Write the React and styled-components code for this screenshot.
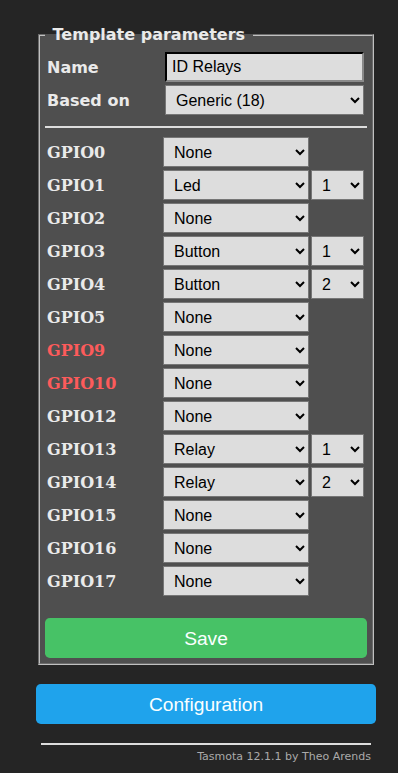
import React from "react"
import styled, { createGlobalStyle } from "styled-components"

const GlobalStyle = createGlobalStyle`
  html, body {
    margin: 0;
    padding: 0;
    background: #252525;
  }
  body {
    font-family: "DejaVu Sans", Verdana, sans-serif;
    color: #eaeaea;
  }
`

const Page = styled.div`
  width: 340px;
  margin: 0 0 0 36px;
  padding-top: 25px;
  padding-bottom: 10px;
  display: flex;
  flex-direction: column;
`

const Fieldset = styled.fieldset`
  margin: 0 2px;
  padding: 5px;
  background: #4f4f4f;
  border: 2px groove #c0c0c0;
  min-width: 0;
`

const Legend = styled.legend`
  padding: 0 2px;
  font-size: 16px;
  font-weight: bold;
  color: #eaeaea;
  white-space: pre;
`

const ParamGrid = styled.div`
  display: grid;
  grid-template-columns: 1fr 199px;
  grid-auto-rows: 30px;
  row-gap: 3px;
  align-items: center;
  padding: 3px 3px 3px 2px;
`

const ParamLabel = styled.span`
  font-size: 16px;
  font-weight: bold;
  color: #eaeaea;
`

const TextInput = styled.input`
  box-sizing: border-box;
  width: 100%;
  height: 100%;
  padding: 5px;
  font: 16px "Liberation Sans", Arial, sans-serif;
  background: #dddddd;
  color: #000;
  border: 2px inset #767676;
  border-top-color: #252525;
  border-left-color: #252525;
  border-bottom-color: #8a8a8a;
  border-right-color: #8a8a8a;
  outline: none;
`

const Select = styled.select`
  box-sizing: border-box;
  width: 100%;
  height: 30px;
  padding: 0 2px 0 6px;
  font: 16px "Liberation Sans", Arial, sans-serif;
  background: #dddddd;
  color: #000;
  border: 1px solid #767676;
  border-radius: 0;
`

const Rule = styled.hr`
  width: 100%;
  height: 2px;
  border: 0;
  margin: 8px 0 9px;
  background: #dddddd;
`

const GpioGrid = styled.div`
  display: grid;
  grid-template-columns: 1fr 146px 53px;
  grid-auto-rows: 30px;
  column-gap: 2px;
  row-gap: 3px;
  align-items: center;
  padding: 0 3px 0 2px;
`

const GpioLabel = styled.span`
  grid-column: 1;
  font-family: "DejaVu Serif", Georgia, serif;
  font-size: 16px;
  font-weight: bold;
  color: ${props => (props.$warn ? "#fd5b5b" : "#eaeaea")};
`

const Button = styled.button`
  display: block;
  width: 100%;
  height: 40px;
  border: 0;
  border-radius: 0.3rem;
  background: ${props => (props.$green ? "#47c266" : "#1fa3ec")};
  color: #faffff;
  font: 19.2px "Liberation Sans", Arial, sans-serif;
  line-height: 40px;
  cursor: pointer;
`

const SaveButton = styled(Button)`
  margin-top: 22px;
`

const ConfigButton = styled(Button)`
  margin-top: 19px;
`

const Footer = styled.div`
  margin-top: 19px;
  padding: 0 5px;
  text-align: right;
  font-size: 11px;
`

const FooterRule = styled.hr`
  height: 2px;
  border: 0;
  margin: 0 0 5px;
  background: #dddddd;
`

const FooterLink = styled.a`
  color: #aaa;
  text-decoration: none;
`

const options = ["None", "Led", "Button", "Relay"]

const gpios = [
  { pin: "GPIO0", fn: "None" },
  { pin: "GPIO1", fn: "Led", idx: 1 },
  { pin: "GPIO2", fn: "None" },
  { pin: "GPIO3", fn: "Button", idx: 1 },
  { pin: "GPIO4", fn: "Button", idx: 2 },
  { pin: "GPIO5", fn: "None" },
  { pin: "GPIO9", fn: "None", warn: true },
  { pin: "GPIO10", fn: "None", warn: true },
  { pin: "GPIO12", fn: "None" },
  { pin: "GPIO13", fn: "Relay", idx: 1 },
  { pin: "GPIO14", fn: "Relay", idx: 2 },
  { pin: "GPIO15", fn: "None" },
  { pin: "GPIO16", fn: "None" },
  { pin: "GPIO17", fn: "None" },
]

const App = () => (
  <>
    <GlobalStyle />
    <Page>
      <Fieldset>
        <Legend>{"\u00a0Template parameters\u00a0"}</Legend>
        <ParamGrid>
          <ParamLabel>Name</ParamLabel>
          <TextInput defaultValue="ID Relays" />
          <ParamLabel>Based on</ParamLabel>
          <Select defaultValue="Generic (18)">
            <option>Generic (18)</option>
          </Select>
        </ParamGrid>
        <Rule />
        <GpioGrid>
          {gpios.map(g => (
            <React.Fragment key={g.pin}>
              <GpioLabel $warn={g.warn}>{g.pin}</GpioLabel>
              <Select defaultValue={g.fn}>
                {options.map(o => (
                  <option key={o}>{o}</option>
                ))}
              </Select>
              {g.idx && (
                <Select defaultValue={String(g.idx)}>
                  {[1, 2, 3, 4].map(n => (
                    <option key={n}>{n}</option>
                  ))}
                </Select>
              )}
            </React.Fragment>
          ))}
        </GpioGrid>
        <SaveButton $green>Save</SaveButton>
      </Fieldset>
      <ConfigButton>Configuration</ConfigButton>
      <Footer>
        <FooterRule />
        <FooterLink href="#">Tasmota 12.1.1 by Theo Arends</FooterLink>
      </Footer>
    </Page>
  </>
)

export default App
